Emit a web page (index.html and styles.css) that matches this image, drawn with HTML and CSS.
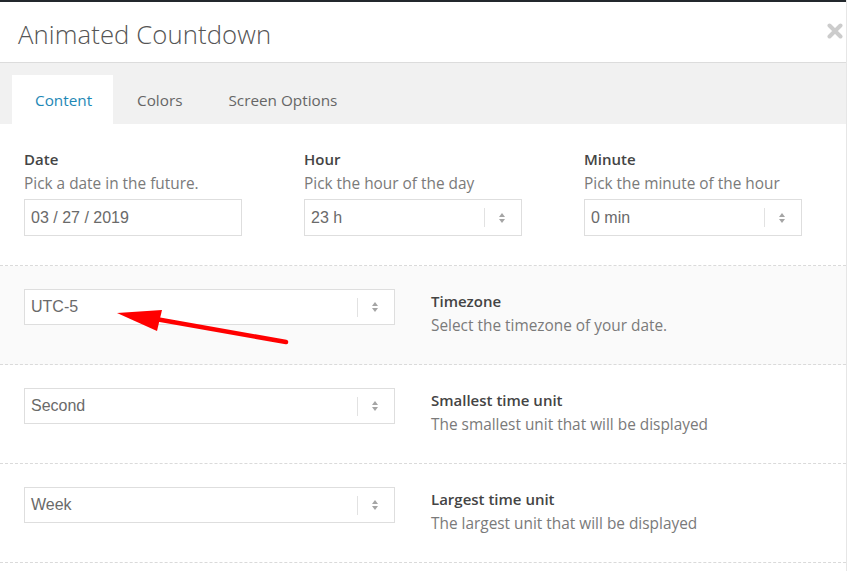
FILE: index.html
```html
<!DOCTYPE html>
<html>
<head>
<meta charset="utf-8">
<link rel="stylesheet" href="styles.css">
</head>
<body>
<div class="modal">
  <div class="topbar"></div>
  <div class="header">
    <h1 class="title">Animated Countdown</h1>
    <svg class="close" width="16" height="16" viewBox="0 0 16 16"><path d="M2.5 2.5 L13.5 13.5 M13.5 2.5 L2.5 13.5" stroke="#cccccc" stroke-width="4" stroke-linecap="round"/></svg>
  </div>
  <div class="tabs">
    <div class="tab active">Content</div>
    <div class="tab">Colors</div>
    <div class="tab">Screen Options</div>
  </div>
  <div class="body">
    <div class="top-fields">
      <div class="field">
        <div class="label">Date</div>
        <div class="desc">Pick a date in the future.</div>
        <div class="input">03 / 27 / 2019</div>
      </div>
      <div class="field">
        <div class="label">Hour</div>
        <div class="desc">Pick the hour of the day</div>
        <div class="input select"><span class="val">23 h</span><span class="sep"></span><span class="arrows"><i class="up"></i><i class="down"></i></span></div>
      </div>
      <div class="field">
        <div class="label">Minute</div>
        <div class="desc">Pick the minute of the hour</div>
        <div class="input select"><span class="val">0 min</span><span class="sep"></span><span class="arrows"><i class="up"></i><i class="down"></i></span></div>
      </div>
    </div>
    <div class="row highlight">
      <div class="input select wide"><span class="val">UTC-5</span><span class="sep"></span><span class="arrows"><i class="up"></i><i class="down"></i></span></div>
      <div class="info">
        <div class="label">Timezone</div>
        <div class="desc">Select the timezone of your date.</div>
      </div>
    </div>
    <div class="row">
      <div class="input select wide"><span class="val">Second</span><span class="sep"></span><span class="arrows"><i class="up"></i><i class="down"></i></span></div>
      <div class="info">
        <div class="label">Smallest time unit</div>
        <div class="desc">The smallest unit that will be displayed</div>
      </div>
    </div>
    <div class="row">
      <div class="input select wide"><span class="val">Week</span><span class="sep"></span><span class="arrows"><i class="up"></i><i class="down"></i></span></div>
      <div class="info">
        <div class="label">Largest time unit</div>
        <div class="desc">The largest unit that will be displayed</div>
      </div>
    </div>
  </div>
  <svg class="annot" width="847" height="571" viewBox="0 0 847 571">
    <line x1="286" y1="342" x2="150" y2="318" stroke="#ff0000" stroke-width="4.5" stroke-linecap="round"/>
    <polygon points="117,313 162,310 157,331" fill="#ff0000"/>
  </svg>
</div>
</body>
</html>
```

FILE: styles.css
```css
* { box-sizing: border-box; }
html, body { margin: 0; padding: 0; background: #fff; }
body { width: 847px; height: 571px; overflow: hidden; font-family: "Open Sans", "Noto Sans", sans-serif; }
.modal { position: relative; width: 847px; height: 571px; background: #fff; border-right: 1px solid #e6e6e6; }
.topbar { height: 2px; background: #23282d; }
.header { height: 61px; display: flex; align-items: center; justify-content: space-between; padding: 0 3px 0 18px; border-bottom: 1px solid #dcdcdc; }
.title { margin: 0; font-weight: 300; font-size: 25.7px; color: #555; letter-spacing: 0.1px; padding-top: 5px; }
.close { flex: none; margin-top: -3px; }
.tabs { background: #f1f1f1; height: 61px; display: flex; align-items: flex-end; padding-left: 12px; }
.tab { height: 49px; display: flex; align-items: center; padding: 0 22px 0 24px; font-size: 15.3px; color: #666; }
.tab.active { background: #fff; color: #1e88b6; padding: 0 0 0 23px; width: 101px; }
.tab:nth-child(2) { padding-left: 24px; padding-right: 22px; }
.body { background: #fff; }
.top-fields { display: grid; grid-template-columns: 218px 218px 218px; column-gap: 62px; padding: 25px 24px 29px; border-bottom: 1px dashed #dadada; }
.label { font-size: 15px; font-weight: 600; color: #444; line-height: 21px; }
.desc { font-size: 15.4px; color: #7a7a7a; line-height: 24px; margin-top: 2px; margin-bottom: 3px; }
.input { height: 37px; border: 1px solid #dedede; background: #fff; display: flex; align-items: center; padding: 0 0 0 6px; font-family: "Liberation Sans", Arial, sans-serif; font-size: 16px; color: #6a6a6a; }
.select .val { flex: 1; }
.sep { width: 1px; height: 19px; background: #e2e2e2; margin-right: 13px; }
.arrows { width: 8px; margin-right: 15px; display: flex; flex-direction: column; align-items: center; gap: 2px; }
.arrows i { display: block; width: 0; height: 0; border-left: 3.5px solid transparent; border-right: 3.5px solid transparent; }
.arrows .up { border-bottom: 4px solid #a5a5a5; }
.arrows .down { border-top: 4px solid #a5a5a5; }
.row { display: flex; align-items: flex-start; padding: 23px 24px 39px; border-bottom: 1px dashed #dadada; height: 99px; }
.row.highlight { background: #fafafa; }
.input.wide { width: 371px; height: 36px; flex: none; }
.info { margin-left: 36px; padding-top: 2px; }
.info .desc { margin-bottom: 0; }
.annot { position: absolute; left: 0; top: 0; pointer-events: none; }
```
